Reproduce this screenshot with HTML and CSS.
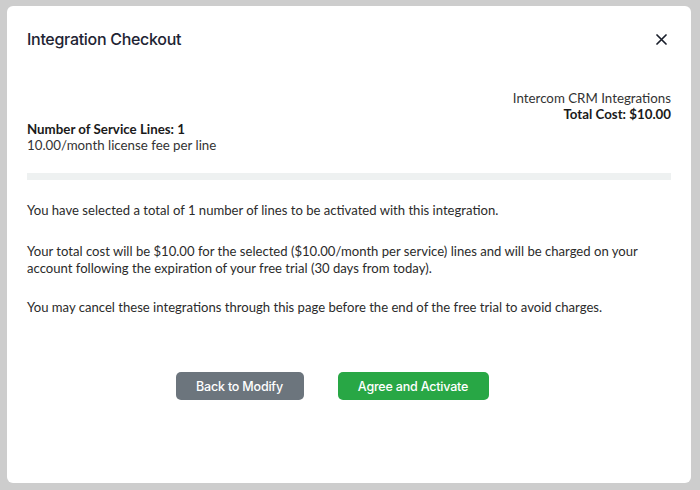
FILE: index.html
```html
<!DOCTYPE html>
<html>
<head>
<meta charset="utf-8">
<link rel="stylesheet" href="styles.css">
</head>
<body>
<div class="backdrop">
  <div class="modal">
    <div class="modal-header">
      <h1 class="title">Integration Checkout</h1>
      <button class="close" aria-label="Close">
        <svg width="11" height="11" viewBox="0 0 11 11"><path d="M1 1L10 10M10 1L1 10" stroke="#1a1f2b" stroke-width="1.7" stroke-linecap="round"/></svg>
      </button>
    </div>
    <div class="modal-body">
      <div class="summary-right">
        <div>Intercom CRM Integrations</div>
        <div class="bold">Total Cost: $10.00</div>
      </div>
      <div class="summary-left">
        <div class="bold">Number of Service Lines: 1</div>
        <div>10.00/month license fee per line</div>
      </div>
      <div class="divider-bar"></div>
      <p class="para p1">You have selected a total of 1 number of lines to be activated with this integration.</p>
      <p class="para p2">Your total cost will be $10.00 for the selected ($10.00/month per service) lines and will be charged on your account following the expiration of your free trial (30 days from today).</p>
      <p class="para p3">You may cancel these integrations through this page before the end of the free trial to avoid charges.</p>
      <div class="actions">
        <button class="btn btn-gray">Back to Modify</button>
        <button class="btn btn-green">Agree and Activate</button>
      </div>
    </div>
  </div>
</div>
</body>
</html>
```
FILE: styles.css
```css
html, body {
  margin: 0;
  padding: 0;
  background: #cdcdcd;
}
.backdrop {
  width: 700px;
  height: 490px;
  box-sizing: border-box;
  padding: 6px 9px 7px 7px;
}
.modal {
  background: #fff;
  border-radius: 6px;
  height: 100%;
  box-sizing: border-box;
  font-family: Lato, "Liberation Sans", sans-serif;
  color: #212529;
}
.modal-header {
  display: flex;
  justify-content: space-between;
  align-items: center;
  padding: 18px 20px 0 20px;
  height: 30px;
}
.title {
  margin: 0;
  font-family: Inter, "Liberation Sans", sans-serif;
  font-weight: 500;
  font-size: 16px;
  letter-spacing: -0.3px;
  color: #1e2433;
}
.close {
  border: 0;
  background: none;
  padding: 0;
  margin-right: 4px;
  width: 11px;
  height: 11px;
  display: flex;
}
.modal-body {
  padding: 36px 20px 0 20px;
  font-size: 13px;
  line-height: 16px;
}
.summary-right {
  text-align: right;
  color: #333;
  font-size: 13.3px;
}
.summary-left {
  margin-top: -1px;
  color: #333;
  font-size: 13.3px;
}
.bold {
  font-weight: 700;
  color: #1a1a1a;
}
.divider-bar {
  height: 7px;
  background: #eef1f1;
  margin-top: 20px;
}
.para {
  margin: 0;
  font-size: 13.1px;
  line-height: 17px;
  color: #2b2b2b;
}
.p1 { margin-top: 22px; }
.p2 { margin-top: 24px; }
.p3 { margin-top: 22px; }
.actions {
  display: flex;
  justify-content: center;
  gap: 34px;
  margin-top: 56px;
  padding-right: 34px;
}
.btn {
  border: 0;
  border-radius: 5px;
  height: 28px;
  font-family: Inter, "Liberation Sans", sans-serif;
  font-size: 12.5px;
  font-weight: 500;
  color: #fff;
  letter-spacing: -0.2px;
}
.btn-gray {
  background: #6c757d;
  width: 128px;
}
.btn-green {
  background: #28a745;
  width: 151px;
}
```
